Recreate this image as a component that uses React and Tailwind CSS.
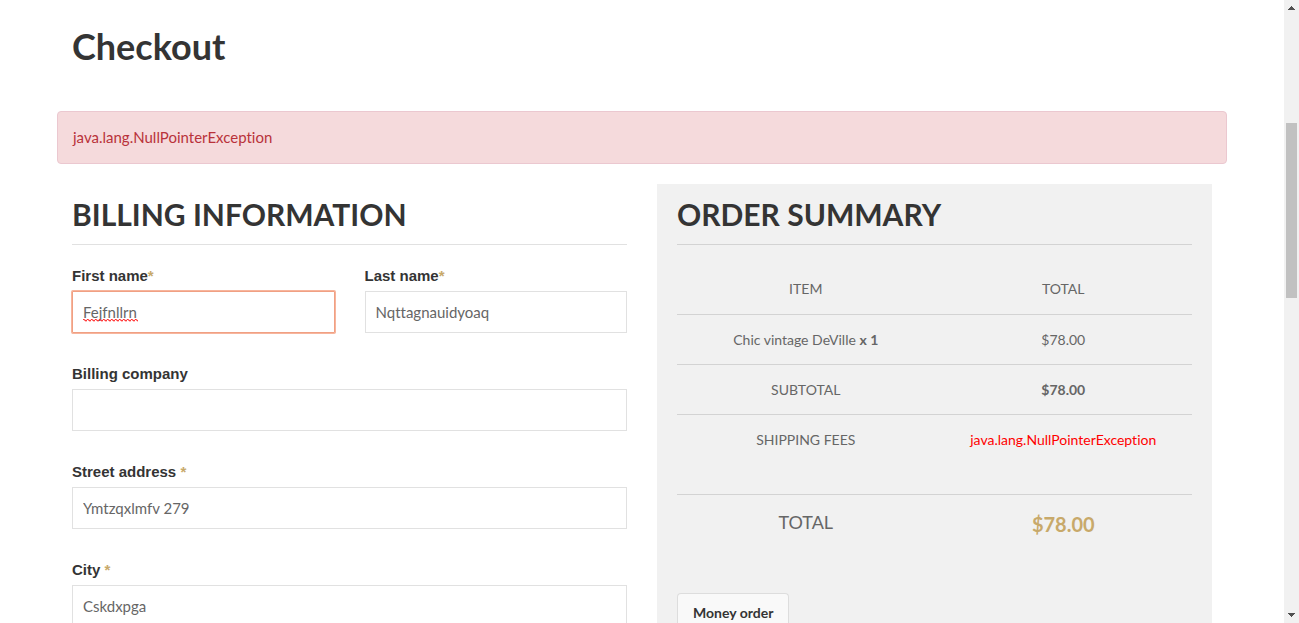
const LABEL = "mb-[5px] block font-['Liberation_Sans',sans-serif] text-[15px] leading-5 font-bold text-[#343434]";
const INPUT = "block h-[42px] w-full border border-[#e1e1e1] bg-white px-[10px] text-[15px] text-[#666] outline-none";

function Star({ spaced }) {
  return (
    <span className="text-[#c8a96a]">{spaced ? " *" : "*"}</span>
  );
}

function Field({ id, label, value = "", required, spaced }) {
  return (
    <div className="mb-[31px]">
      <label htmlFor={id} className={LABEL}>
        {label}
        {required && <Star spaced={spaced} />}
      </label>
      <input id={id} type="text" defaultValue={value} spellCheck={false} className={INPUT} />
    </div>
  );
}

function FirstNameField() {
  return (
    <div className="mb-[31px]">
      <label htmlFor="first-name" className={LABEL}>
        First name
        <Star />
      </label>
      <div className="relative">
        <input
          id="first-name"
          type="text"
          defaultValue="Fejfnllrn"
          spellCheck={false}
          className="block h-[42px] w-full rounded-[1px] border border-[#f0a083] bg-white px-[10px] text-[15px] text-[#666] outline-none ring-1 ring-[#f7b59d]"
        />
        <svg className="pointer-events-none absolute top-[27px] left-[11px]" width="55" height="4" aria-hidden="true">
          <defs>
            <pattern id="wave" width="4" height="4" patternUnits="userSpaceOnUse">
              <path d="M0 1.5 L1 1.5 L3 3 L4 2" fill="none" stroke="#f33" strokeWidth="1.1" />
            </pattern>
          </defs>
          <rect width="55" height="4" fill="url(#wave)" />
        </svg>
      </div>
    </div>
  );
}

function Scrollbar() {
  return (
    <div className="flex w-[15px] shrink-0 flex-col items-center bg-[#f1f1f1]" aria-hidden="true">
      <svg width="15" height="15" shapeRendering="crispEdges">
        <path d="M7 6h1v1h1v1h1v1h1v1H4V9h1V8h1V7h1z" fill="#505050" />
      </svg>
      <div className="flex w-[11px] flex-1 flex-col">
        <div className="grow-108 basis-0" />
        <div className="grow-175 basis-0 bg-[#c1c1c1]" />
        <div className="grow-310 basis-0" />
      </div>
      <svg width="15" height="15" shapeRendering="crispEdges">
        <path d="M4 5h7v1h-1v1H9v1H8v1H7V8H6V7H5V6H4z" fill="#505050" />
      </svg>
    </div>
  );
}

const ROW = "border-b border-[#d3d3d3]";

function OrderSummary() {
  return (
    <section className="bg-[#f1f1f1] px-5 pb-10">
      <h2 className="border-b border-[#d3d3d3] py-[10px] text-[30px] leading-10 font-bold text-[#343434]">
        ORDER SUMMARY
      </h2>
      <table className="mt-5 w-full table-fixed text-center text-[14px] leading-5">
        <thead>
          <tr className={ROW}>
            <th scope="col" className="pt-[14px] pb-[15px] font-normal">ITEM</th>
            <th scope="col" className="pt-[14px] pb-[15px] font-normal">TOTAL</th>
          </tr>
        </thead>
        <tbody>
          <tr className={ROW}>
            <td className="pt-[15px] pb-[14px]">Chic vintage DeVille <strong>x 1</strong></td>
            <td className="pt-[15px] pb-[14px]">$78.00</td>
          </tr>
          <tr className={ROW}>
            <th scope="row" className="pt-[15px] pb-[14px] font-normal">SUBTOTAL</th>
            <td className="pt-[15px] pb-[14px] font-bold">$78.00</td>
          </tr>
          <tr className={ROW}>
            <th scope="row" className="pt-[15px] pb-11 font-normal">SHIPPING FEES</th>
            <td className="pt-[15px] pb-11 text-[#f00]">java.lang.NullPointerException</td>
          </tr>
          <tr>
            <th scope="row" className="pt-[15px] pb-4 align-top text-[18px] leading-6 font-normal">TOTAL</th>
            <td className="pt-[15px] pb-4 text-[20px] leading-7 font-bold text-[#c8a96a]">$78.00</td>
          </tr>
        </tbody>
      </table>
      <button
        type="button"
        className="mt-[39px] rounded-t-[4px] border border-b-0 border-[#ddd] bg-[#f9f9f9] px-[15px] py-[9px] text-[14px] leading-5 font-bold text-[#343434]"
      >
        Money order
      </button>
    </section>
  );
}

export default function App() {
  return (
    <div className="flex h-screen overflow-hidden bg-white font-['Lato',sans-serif] text-[15px] text-[#666] [font-variant-ligatures:none]">
      <main className="min-w-0 flex-1 overflow-hidden">
        <div className="mx-auto max-w-[1170px]">
          <h1 className="px-[15px] pt-[22px] pb-[41px] text-[36px] leading-[48px] font-bold text-[#343434]">Checkout</h1>
          <div role="alert" className="mb-5 rounded-[4px] border border-[#ebc8d0] bg-[#f5dadc] px-[15px] py-[14px] leading-[23px] text-[#b9323a]">
            java.lang.NullPointerException
          </div>
          <div className="grid grid-cols-2 gap-[30px] px-[15px]">
            <form>
              <h2 className="border-b border-[#e1e1e1] py-[10px] text-[30px] leading-10 font-bold text-[#343434]">
                BILLING INFORMATION
              </h2>
              <div className="mt-[21px] grid grid-cols-2 gap-x-[30px]">
                <FirstNameField />
                <Field id="last-name" label="Last name" value="Nqttagnauidyoaq" required />
              </div>
              <Field id="company" label="Billing company" />
              <Field id="street" label="Street address" value="Ymtzqxlmfv 279" required spaced />
              <Field id="city" label="City" value="Cskdxpga" required spaced />
            </form>
            <OrderSummary />
          </div>
        </div>
      </main>
      <Scrollbar />
    </div>
  );
}
